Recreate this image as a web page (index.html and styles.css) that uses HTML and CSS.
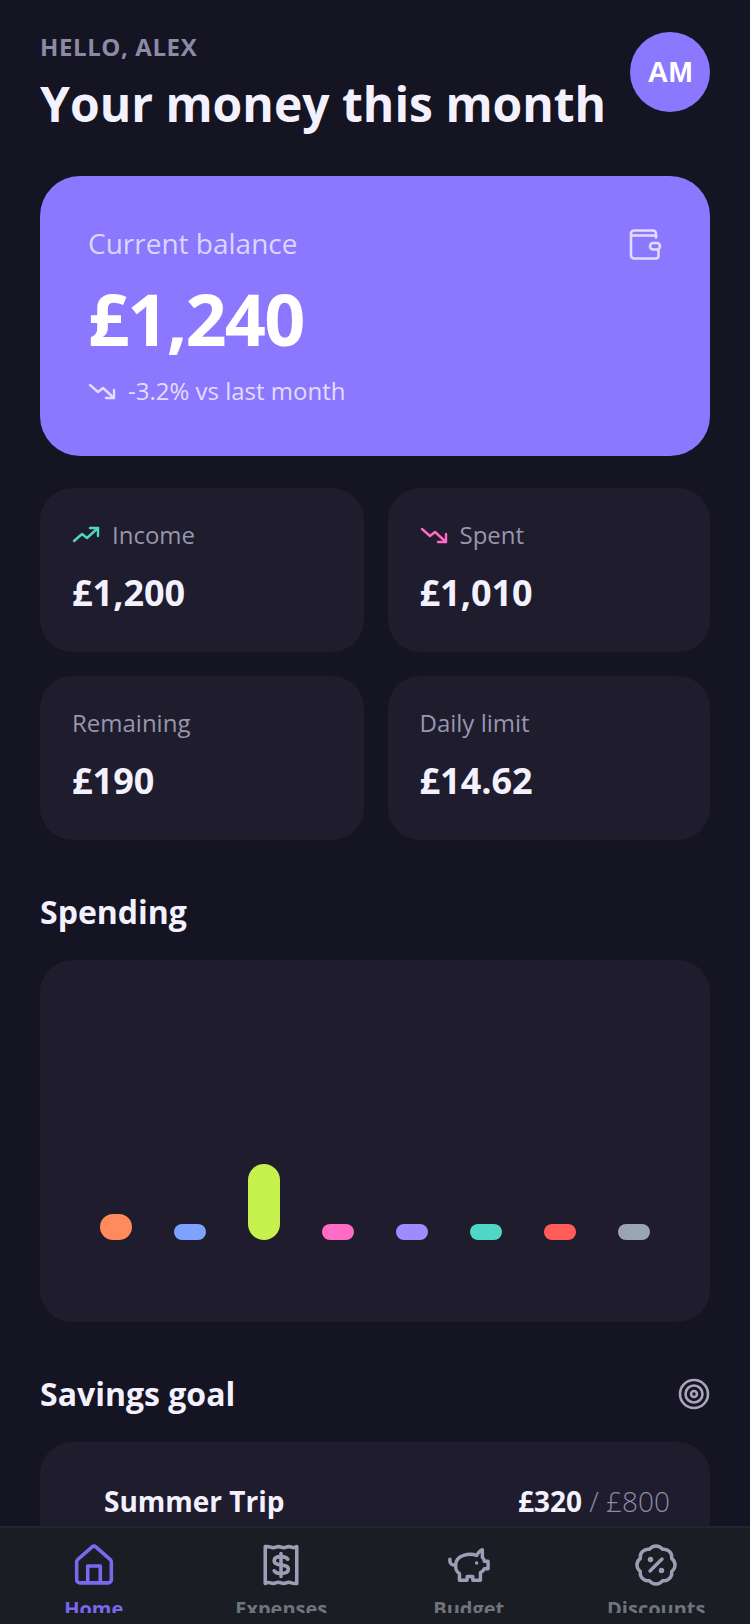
FILE: index.html
```html
<!DOCTYPE html>
<html lang="en">
<head>
<meta charset="UTF-8" />
<meta name="viewport" content="width=device-width, initial-scale=1.0">
<title>Your money this month</title>
<link rel="stylesheet" href="styles.css">
</head>
<body>
  <main class="page">
    <header class="top">
      <div>
        <p class="hello">HELLO, ALEX</p>
        <h1 class="title">Your money this month</h1>
      </div>
      <div class="avatar">AM</div>
    </header>

    <section class="balance">
      <div class="balance-head">
        <span class="balance-label">Current balance</span>
        <svg class="wallet" viewBox="0 0 33 32" fill="none" stroke="currentColor" stroke-width="2.6" stroke-linecap="round" stroke-linejoin="round">
          <path d="M27 9.500V5.500a3 3 0 0 0-3-3H5a3 3 0 0 0-3 3v22a3 3 0 0 0 3 3h22a2.500 2.500 0 0 0 2.500-2.500v-6"/>
          <path d="M2.500 7.500h24.500"/>
          <rect x="21" y="15" width="10" height="6.500" rx="3.200"/>
        </svg>
      </div>
      <div class="balance-amount">£1,240</div>
      <div class="balance-change">
        <svg class="trend" viewBox="0 0 28 20" fill="none" stroke="currentColor" stroke-width="2.400" stroke-linecap="round" stroke-linejoin="round">
          <path d="M2 4l8 7 5-4 11 10"/><path d="M26 9v8h-8"/>
        </svg>
        <span>-3.2% vs last month</span>
      </div>
    </section>

    <section class="stats">
      <div class="stat">
        <div class="stat-label">
          <svg class="trend up" viewBox="0 0 28 20" fill="none" stroke="currentColor" stroke-width="2.400" stroke-linecap="round" stroke-linejoin="round">
            <path d="M2 16l8-7 5 4 11-10"/><path d="M18 3h8v8"/>
          </svg>
          Income
        </div>
        <div class="stat-value">£1,200</div>
      </div>
      <div class="stat">
        <div class="stat-label">
          <svg class="trend down" viewBox="0 0 28 20" fill="none" stroke="currentColor" stroke-width="2.400" stroke-linecap="round" stroke-linejoin="round">
            <path d="M2 4l8 7 5-4 11 10"/><path d="M26 9v8h-8"/>
          </svg>
          Spent
        </div>
        <div class="stat-value">£1,010</div>
      </div>
      <div class="stat">
        <div class="stat-label">Remaining</div>
        <div class="stat-value">£190</div>
      </div>
      <div class="stat">
        <div class="stat-label">Daily limit</div>
        <div class="stat-value">£14.62</div>
      </div>
    </section>

    <h2 class="section-title spending-title">Spending</h2>
    <section class="chart">
      <div class="bar orange"></div>
      <div class="bar blue"></div>
      <div class="bar lime"></div>
      <div class="bar pink"></div>
      <div class="bar violet"></div>
      <div class="bar teal"></div>
      <div class="bar red"></div>
      <div class="bar grey"></div>
    </section>

    <div class="section-row">
      <h2 class="section-title">Savings goal</h2>
      <svg class="target" viewBox="0 0 32 32" fill="none" stroke="currentColor" stroke-width="2.600">
        <circle cx="16" cy="16" r="14"/><circle cx="16" cy="16" r="8.500"/><circle cx="16" cy="16" r="3"/>
      </svg>
    </div>
    <section class="goal">
      <div class="goal-row">
        <span class="goal-name">Summer Trip</span>
        <span class="goal-sum"><strong>£320</strong> / £800</span>
      </div>
    </section>
  </main>

  <nav class="tabbar">
    <a class="tab active">
      <svg viewBox="0 0 40 40" fill="none" stroke="currentColor" stroke-width="3.400" stroke-linecap="round" stroke-linejoin="round">
        <path d="M3.500 17a3 3 0 0 1 1-2.200L18 3a3 3 0 0 1 4 0l13.500 11.800a3 3 0 0 1 1 2.200v17a3 3 0 0 1-3 3h-27a3 3 0 0 1-3-3z"/>
        <path d="M14 37V21h12v16"/>
      </svg>
      <span>Home</span>
    </a>
    <a class="tab">
      <svg viewBox="0 0 40 40" fill="none" stroke="currentColor" stroke-width="3.400" stroke-linecap="round" stroke-linejoin="round">
        <path d="M5 2.500v35q2.500-1.500 5-.5t5 0 5 0 5 0 5 0 5 .5v-35q-2.500 1.500-5 .5t-5 0-5 0-5 0-5 0-5-.5z"/>
        <path d="M26.500 14.500c-1-1.700-3.200-2.500-6.500-2.500-3.700 0-6.500 1.300-6.500 4 0 6 13.500 2.200 13.500 8 0 2.700-3 4-7 4-3.300 0-5.500-.8-6.500-2.500"/>
        <path d="M20 9v22"/>
      </svg>
      <span>Expenses</span>
    </a>
    <a class="tab">
      <svg viewBox="1 1 22 22" fill="none" stroke="currentColor" stroke-width="1.800" stroke-linecap="round" stroke-linejoin="round">
        <path d="M19 4c-1.500.5-2.800 2.400-3 3-3.500-1.500-11-.3-11 5 0 1.800 0 3 2 4.500V20h4v-2h3v2h4v-4c1-.5 1.700-1 2-2h2v-4h-2c0-1-.5-1.500-1-2V4z"/>
        <path d="M2 9v1c0 1.100.9 2 2 2h1"/>
        <path d="M16 11h.01"/>
      </svg>
      <span>Budget</span>
    </a>
    <a class="tab">
      <svg viewBox="-1 -1 42 42" fill="none" stroke="currentColor" stroke-width="3.400" stroke-linecap="round" stroke-linejoin="round">
        <path d="M26.500 4.300A8 8 0 0 1 35.700 13.500A8 8 0 0 1 35.700 26.500A8 8 0 0 1 26.500 35.700A8 8 0 0 1 13.500 35.700A8 8 0 0 1 4.300 26.500A8 8 0 0 1 4.300 13.500A8 8 0 0 1 13.500 4.300A8 8 0 0 1 26.500 4.300z"/>
        <path d="M26 14L14 26"/>
        <circle cx="14.500" cy="14.500" r="1" fill="currentColor"/>
        <circle cx="25.500" cy="25.500" r="1" fill="currentColor"/>
      </svg>
      <span>Discounts</span>
    </a>
  </nav>
</body>
</html>
```

FILE: styles.css
```css
* {
  box-sizing: border-box;
}
html, body {
  margin: 0;
  height: 1624px;
  overflow: hidden;
}
body {
  position: relative;
  background: #151422;
  color: #f3f1fd;
  font-family: "Open Sans", sans-serif;
}
.page {
  padding: 32px 40px 0;
}
.top {
  display: flex;
  justify-content: space-between;
  align-items: flex-start;
  height: 144px;
}
.hello {
  margin: 0;
  padding-top: 1px;
  font-size: 24px;
  line-height: 28px;
  font-weight: 700;
  letter-spacing: 0.6px;
  color: #8d8aa5;
}
.title {
  margin: 11px 0 0;
  font-size: 48px;
  line-height: 64px;
  font-weight: 700;
}
.avatar {
  width: 80px;
  height: 80px;
  border-radius: 50%;
  background: #8b78ff;
  color: #fff;
  display: flex;
  align-items: center;
  justify-content: center;
  font-family: "Liberation Sans", sans-serif;
  font-size: 29px;
  font-weight: 700;
}
.balance {
  height: 280px;
  padding: 49px 48px;
  border-radius: 40px;
  background: #8b78ff;
  color: #fff;
}
.balance-head {
  display: flex;
  justify-content: space-between;
  align-items: flex-start;
}
.balance-label {
  font-size: 28px;
  line-height: 36px;
  color: #dcd6ff;
}
.wallet {
  width: 33px;
  height: 32px;
  margin-top: 3px;
  color: #e2ddff;
}
.balance-amount {
  margin-top: 13px;
  font-size: 72px;
  line-height: 88px;
  font-weight: 700;
  letter-spacing: -1.8px;
}
.balance-change {
  margin-top: 13px;
  display: flex;
  align-items: center;
  gap: 12px;
  font-size: 24px;
  line-height: 32px;
  color: #e2ddff;
}
.trend {
  width: 28px;
  height: 20px;
  flex-shrink: 0;
}
.trend.up {
  color: #4fd6c4;
}
.trend.down {
  color: #ff6bc5;
}
.stats {
  margin-top: 32px;
  display: grid;
  grid-template-columns: 323.5px 1fr;
  gap: 24px;
}
.stat {
  height: 164px;
  padding: 31px 32px;
  border-radius: 32px;
  background: #1e1c2d;
}
.stat-label {
  display: flex;
  align-items: center;
  gap: 12px;
  font-size: 24px;
  line-height: 32px;
  color: #9896ad;
}
.stat-value {
  margin-top: 18px;
  font-size: 36px;
  line-height: 48px;
  font-weight: 700;
}
.section-title {
  margin: 0;
  font-size: 32px;
  line-height: 44px;
  font-weight: 700;
}
.spending-title {
  margin-top: 50px;
}
.chart {
  margin-top: 26px;
  height: 362px;
  padding: 0 60px 82px;
  border-radius: 32px;
  background: #1e1c2d;
  display: flex;
  justify-content: space-between;
  align-items: flex-end;
}
.bar {
  width: 32px;
  height: 16px;
  border-radius: 999px;
}
.orange { height: 26px; background: #ff8a5c; }
.blue { background: #7ea2ff; }
.lime { height: 76px; background: #c6f24e; }
.pink { background: #ff6bc5; }
.violet { background: #9c8cff; }
.teal { background: #4fd6c4; }
.red { background: #ff5c5c; }
.grey { background: #9aa5b1; }
.section-row {
  margin-top: 50px;
  display: flex;
  justify-content: space-between;
  align-items: center;
}
.target {
  width: 32px;
  height: 32px;
  color: #a8a5bd;
}
.goal {
  margin-top: 26px;
  height: 200px;
  padding: 40px 40px 0 64px;
  border-radius: 32px;
  background: #1e1c2d;
}
.goal-row {
  display: flex;
  justify-content: space-between;
  align-items: center;
}
.goal-name {
  font-size: 28px;
  line-height: 38px;
  font-weight: 700;
}
.goal-sum {
  font-size: 28px;
  line-height: 38px;
  color: #8d8aa5;
  font-weight: 300;
}
.goal-sum strong {
  color: #f3f1fd;
  font-weight: 700;
}
.tabbar {
  position: absolute;
  left: 0;
  right: 0;
  bottom: 0;
  height: 98px;
  padding-top: 16px;
  background: #1a1d24;
  border-top: 2px solid #23262e;
  display: grid;
  grid-template-columns: repeat(4, 1fr);
}
.tab {
  height: 69px;
  overflow: hidden;
  display: flex;
  flex-direction: column;
  align-items: center;
  color: #9f9cb5;
  font-size: 20px;
  line-height: 28px;
  font-weight: 700;
}
.tab svg {
  width: 42px;
  height: 42px;
  flex-shrink: 0;
}
.tab span {
  margin-top: 9px;
  color: #6f747c;
}
.tab.active {
  color: #7b68ee;
}
.tab.active span {
  color: #7b68ee;
}
```
